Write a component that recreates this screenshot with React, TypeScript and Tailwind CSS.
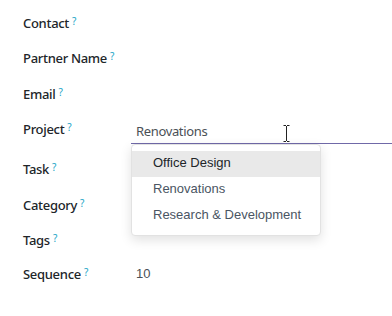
import React from "react";

const Q = () => (
  <sup className="ml-[3px] text-[10px] font-normal text-[#1aa3c6] relative top-[-3px]">?</sup>
);

const Label = ({ children }: { children: React.ReactNode }) => (
  <div className="w-[108px] shrink-0 text-[13px] leading-[20px] font-medium text-[#212529] tracking-[-0.3px]">
    {children}
    <Q />
  </div>
);

export default function App() {
  return (
    <div
      className="relative w-[392px] h-[316px] bg-white overflow-hidden pl-[23px] pt-[13px]"
      style={{ fontFamily: '"Noto Sans", sans-serif' }}
    >
      <div className="flex flex-col">
        <div className="flex h-[35px]">
          <Label>Contact</Label>
        </div>
        <div className="flex h-[36px]">
          <Label>Partner Name</Label>
        </div>
        <div className="flex h-[35px]">
          <Label>Email</Label>
        </div>
        <div className="flex items-start h-[40px]">
          <Label>Project</Label>
          <div className="flex-1 relative">
            <div className="pt-[2px] pb-[2px] border-b border-[#7069a8] pl-[5px] text-[13px] leading-[20px] text-[#4a5056] tracking-[-0.35px]">
              Renovations
            </div>
            <div
              className="absolute top-full left-0 w-[190px] z-10 bg-white border border-[#e2e2e2] rounded-[4px] py-[6px] shadow-[0_4px_12px_rgba(0,0,0,0.12)]"
              style={{ fontFamily: '"Liberation Sans", Arial, sans-serif' }}
            >
              <div className="h-[26px] leading-[24px] pl-[21px] text-[13px] bg-[#e9e9e9] text-[#212529]">
                Office Design
              </div>
              <div className="h-[26px] leading-[24px] pl-[21px] text-[13px] text-[#4a5563]">
                Renovations
              </div>
              <div className="h-[26px] leading-[24px] pl-[21px] text-[13px] text-[#4a5563]">
                Research &amp; Development
              </div>
            </div>
          </div>
        </div>
        <div className="flex h-[36px]">
          <Label>Task</Label>
        </div>
        <div className="flex h-[35px]">
          <Label>Category</Label>
        </div>
        <div className="flex h-[34px]">
          <Label>Tags</Label>
        </div>
        <div className="flex h-[34px]">
          <Label>Sequence</Label>
          <div
            className="pl-[5px] text-[13px] leading-[20px] text-[#4a5056]"
            style={{ fontFamily: '"Liberation Sans", Arial, sans-serif' }}
          >
            10
          </div>
        </div>
      </div>
      <svg
        className="absolute left-[282px] top-[124px] z-20"
        width="9"
        height="19"
        viewBox="0 0 9 19"
      >
        <path
          d="M1.5 1.5h2.5M5 1.5h2.5M4.5 2v15M1.5 17.5h2.5M5 17.5h2.5"
          stroke="#fff"
          strokeWidth="3"
          fill="none"
        />
        <path
          d="M1.5 1.5h2.5M5 1.5h2.5M4.5 2v15M1.5 17.5h2.5M5 17.5h2.5"
          stroke="#222"
          strokeWidth="1"
          fill="none"
        />
      </svg>
    </div>
  );
}
